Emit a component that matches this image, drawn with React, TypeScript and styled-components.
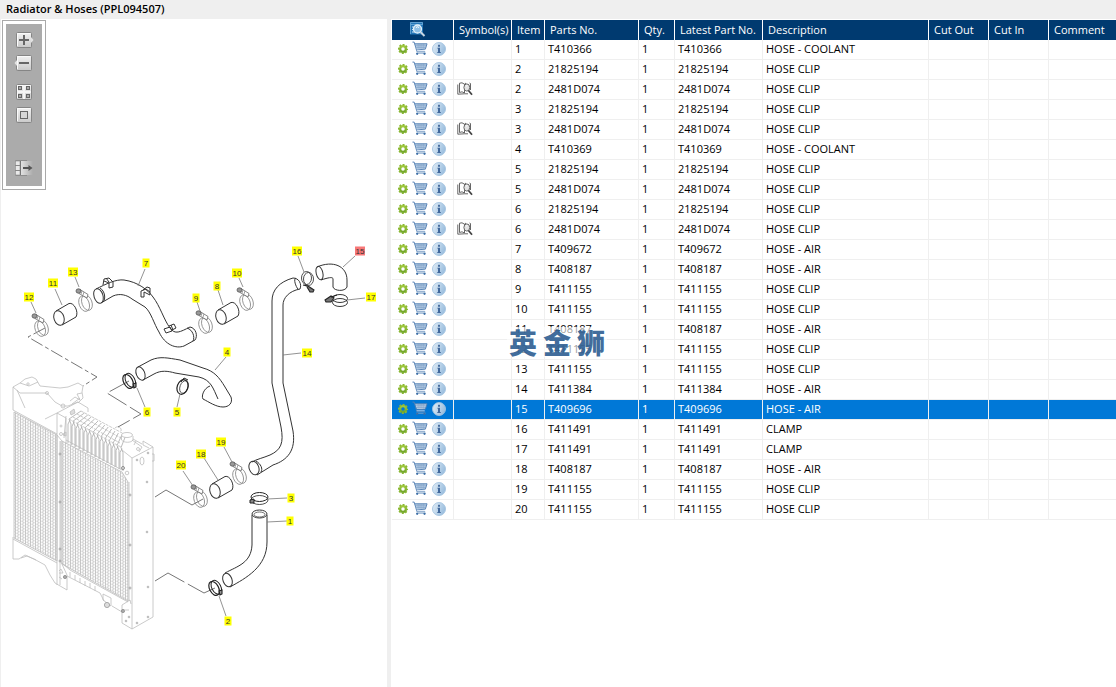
import React from "react";
import styled, { createGlobalStyle } from "styled-components";

const GlobalStyle = createGlobalStyle`
  * { box-sizing: border-box; }
  html, body { margin: 0; height: 100%; }
  body {
    background: #fff;
    color: #000;
    font-family: "Open Sans", "Noto Sans", sans-serif;
    font-size: 11px;
    line-height: 17px;
  }
`;

const Page = styled.div`
  display: flex;
  flex-direction: column;
  min-height: 100vh;
`;

const TitleBar = styled.h1`
  margin: 0;
  padding: 0 6px;
  height: 19px;
  line-height: 18px;
  font-size: 11px;
  font-weight: 600;
  background: #efefef;
`;

const Workspace = styled.main`
  flex: 1;
  display: flex;
  align-items: stretch;
  min-width: 0;
`;

const DrawingPane = styled.section`
  flex: 0 0 387px;
  padding: 1px 0 0;
  border-left: 1px solid #efefef;
`;

const ToolFrame = styled.div`
  width: 44px;
  margin-left: 1px;
  padding: 3px;
  border: 1px solid #a9a9a9;
`;

const Tools = styled.div`
  display: flex;
  flex-direction: column;
  align-items: center;
  gap: 7px;
  padding: 8px 0 10px;
  background: #ababab;
`;

const ToolButton = styled.button<{ $before?: number }>`
  display: block;
  width: 20px;
  height: 16px;
  margin: ${(p) => p.$before ?? 0}px 0 0;
  padding: 0;
  border: 0;
  background: none;
  cursor: pointer;
  svg { display: block; }
`;

const Drawing = styled.svg`
  display: block;
  width: 100%;
`;

const Splitter = styled.div`
  flex: 0 0 4px;
  background: #efefef;
  cursor: col-resize;
`;

const ListPane = styled.section`
  position: relative;
  flex: 1;
  min-width: 0;
  padding: 1px 0 0 1px;
  overflow: hidden;
`;

const PartsTable = styled.table`
  width: 100%;
  table-layout: fixed;
  border-collapse: separate;
  border-spacing: 0;
`;

const Col = styled.col<{ $w?: number }>`
  width: ${(p) => (p.$w ? `${p.$w}px` : "auto")};
`;

const HeadCell = styled.th`
  height: 20px;
  padding: 0 0 2px 5px;
  border-right: 1px solid #fff;
  background: #003a70;
  color: #fff;
  font-weight: 400;
  text-align: left;
  white-space: nowrap;
  svg { display: block; margin-left: 12px; }
  &:last-child { border-right: 0; }
`;

const Cell = styled.td`
  height: 20px;
  padding: 0 0 2px 3px;
  border-right: 1px solid #efefef;
  border-bottom: 1px solid #efefef;
  white-space: nowrap;
  &:last-child { border-right: 0; }
`;

const Row = styled.tr<{ $selected?: boolean }>`
  background: ${(p) => (p.$selected ? "#0078d7" : "#fff")};
  color: ${(p) => (p.$selected ? "#fff" : "#000")};
`;

const Actions = styled.div`
  display: flex;
  align-items: center;
  height: 17px;
  padding-left: 3px;
  gap: 4px;
`;

const IconButton = styled.button`
  display: block;
  padding: 0;
  border: 0;
  background: none;
  cursor: pointer;
  svg { display: block; }
`;

const Watermark = styled.div`
  position: absolute;
  left: 116px;
  top: 308px;
  display: flex;
  gap: 6px;
  padding: 0 2px;
  height: 30px;
  line-height: 30px;
  background: rgba(255, 255, 255, 0.6);
  color: rgba(39, 89, 142, 0.88);
  font-family: "Noto Sans CJK SC", sans-serif;
  font-size: 28px;
  font-weight: 900;
  pointer-events: none;
`;

const HiddenDefs = styled.svg`
  position: absolute;
`;

const SharedIcons = () => (
  <HiddenDefs width="0" height="0" aria-hidden="true">
    <defs>
      <linearGradient id="toolFace" x1="0" y1="0" x2="0" y2="1">
        <stop offset="0" stopColor="#f3f3f3" />
        <stop offset="1" stopColor="#c9c9c9" />
      </linearGradient>
      <linearGradient id="fade" x1="0" y1="0" x2="1" y2="0">
        <stop offset="0" stopColor="#e2e2e2" />
        <stop offset="1" stopColor="#ababab" />
      </linearGradient>
      <linearGradient id="leaf" x1="0" y1="0" x2="0" y2="1">
        <stop offset="0" stopColor="#a3cb3d" />
        <stop offset="1" stopColor="#6fa32a" />
      </linearGradient>
      <linearGradient id="glass" x1="0" y1="0" x2="1" y2="0.4">
        <stop offset="0" stopColor="#e6f0f8" />
        <stop offset="1" stopColor="#9cbfdf" />
      </linearGradient>
    </defs>
    <symbol id="gear" viewBox="0 0 10 10">
      <circle cx="5" cy="5" r="2.9" fill="none" stroke="url(#leaf)" strokeWidth="2.3" />
      <circle cx="5" cy="5" r="4.3" fill="none" stroke="#8ab832" strokeWidth="1.6" strokeDasharray="2 1.377" strokeDashoffset="1" />
    </symbol>
    <symbol id="cart" viewBox="0 0 17 15">
      <path d="M3 2.5H16L14 8H5z" fill="#b9cfe6" />
      <path d="M3.5 4.5h12M4.5 6.5h10M6.5 2.5v5M8.5 2.5v5M10.5 2.5v5M12.5 2.5v5" stroke="#7d9fc6" strokeWidth="0.6" fill="none" />
      <path d="M0.500 0.700H2.300L5.300 11H14M2.800 2.500H16L14.200 8.200L5 9" fill="none" stroke="#5380b3" strokeWidth="1" />
      <path d="M5 9.900H13.500" stroke="#d5e2ef" strokeWidth="0.800" />
      <path d="M4.500 12.500H14.500" stroke="#7ea2c9" />
      <circle cx="5.500" cy="13.200" r="1.200" fill="#3c6ea6" />
      <circle cx="13.300" cy="13.200" r="1.200" fill="#3c6ea6" />
    </symbol>
    <symbol id="info" viewBox="0 0 14 14">
      <circle cx="7" cy="7" r="6.500" fill="url(#glass)" stroke="#a3c3e0" strokeWidth="0.900" />
      <rect x="6" y="2.800" width="2" height="2" rx="0.500" fill="#41689c" />
      <path d="M5.500 5.800H8V10H8.800V11H5.300V10H6V6.800H5.500z" fill="#41689c" />
    </symbol>
    <symbol id="book" viewBox="0 0 16 14">
      <path d="M1.500 2L4 0.800L7.500 2.200L13 0.800L14 2V12H8L1 12.500z" fill="#fff" />
      <path d="M2.500 10.500V1.200L5 0.800L7.500 2.200V11L5 9.800L2.500 10.500M7.500 2.200L9 1M12.500 1L13.500 1.500V8M0.800 2.500V12.200L7.500 11.800H11" fill="none" stroke="#555" strokeWidth="0.900" />
      <ellipse cx="9.800" cy="5.500" rx="2.900" ry="3.600" fill="#e4e4e4" stroke="#666" />
      <path d="M9 4.200L10.500 3.500" stroke="#fff" />
      <path d="M11.500 8.500L15 12.800" stroke="#444" strokeWidth="1.800" />
    </symbol>
    <symbol id="lookup" viewBox="0 0 17 16">
      <rect x="1" y="1" width="13" height="12.500" fill="#2476b8" />
      <path d="M1.500 13V1.500H13.500V4" fill="none" stroke="#5f9fd0" />
      <path d="M1 3.500H14" stroke="#5fa3d6" />
      <path d="M3 6H5M3 8.500H4.500M3 11H6" stroke="#cfe4f4" />
      <circle cx="8.500" cy="8" r="4" fill="#8fc0e6" stroke="#e4f1fa" strokeWidth="1.300" />
      <path d="M7 6.500Q8.500 5 10 6.500" fill="none" stroke="#fff" />
      <path d="M11.500 11L15.500 15" stroke="#c7d5e2" strokeWidth="2" />
    </symbol>
  </HiddenDefs>
);

const Icon = ({ name, w, h }: { name: string; w: number; h: number }) => (
  <svg width={w} height={h} aria-hidden="true"><use href={`#${name}`} /></svg>
);

const Face = () => (
  <>
    <rect x="2.500" y="0.500" width="15" height="15" rx="1" fill="url(#toolFace)" stroke="#858585" />
    <path d="M3.500 14V1.500H16" fill="none" stroke="#fafafa" />
  </>
);

const Toolbar = () => (
  <ToolFrame>
    <Tools role="toolbar" aria-label="Drawing tools">
      <ToolButton aria-label="Zoom in">
        <svg width="20" height="16">
          <Face />
          <path d="M17 5L19.500 8L17 11z" fill="#e3e3e3" />
          <path d="M5 8H15M10 3V13" stroke="#666" strokeWidth="2" />
        </svg>
      </ToolButton>
      <ToolButton aria-label="Zoom out">
        <svg width="20" height="16">
          <Face />
          <path d="M3 5L0.500 8L3 11z" fill="#e3e3e3" />
          <path d="M5 8H15" stroke="#666" strokeWidth="2" />
        </svg>
      </ToolButton>
      <ToolButton aria-label="Fit to window" $before={6}>
        <svg width="20" height="16">
          <Face />
          <path d="M10 1V15M3 8H17" stroke="#f4f4f4" strokeWidth="2" />
          {[[4.5, 2.5], [12.5, 2.5], [4.5, 10.5], [12.5, 10.5]].map(([x, y]) => (
            <rect key={`${x}-${y}`} x={x} y={y} width="3" height="3" fill="#aaa" stroke="#666" />
          ))}
        </svg>
      </ToolButton>
      <ToolButton aria-label="Actual size">
        <svg width="20" height="16">
          <Face />
          <rect x="6.500" y="4.500" width="7" height="7" fill="#d6d6d6" stroke="#666" />
        </svg>
      </ToolButton>
      <ToolButton aria-label="Hide list" $before={30}>
        <svg width="20" height="16">
          <rect x="7" y="1" width="12" height="14" fill="url(#fade)" />
          <path d="M1.500 0.500H13M1.500 15.500H13" stroke="#8e8e8e" />
          <rect x="1.500" y="1" width="4.500" height="14" fill="#e9e9e9" stroke="#8b8b8b" strokeWidth="0.600" />
          <path d="M1 5.500H6M1 10.500H6" stroke="#888" />
          <path d="M6.500 1V15" stroke="#777" />
          <path d="M9 8H15" stroke="#555" strokeWidth="2" />
          <path d="M14.500 5L18.500 8L14.500 11z" fill="#555" />
        </svg>
      </ToolButton>
    </Tools>
  </ToolFrame>
);

type Callout = { n: number; x: number; y: number; line: string; hot?: boolean };

const callouts: Callout[] = [
  { n: 12, x: 29, y: 297, line: "M31 302L36 313" },
  { n: 11, x: 53, y: 283, line: "M55 289L62 305" },
  { n: 13, x: 73, y: 272, line: "M75 277L79 287" },
  { n: 7, x: 146, y: 263, line: "M145 269L138 286" },
  { n: 10, x: 237, y: 273, line: "M239 278L243 287" },
  { n: 8, x: 217, y: 286, line: "M218 290L223 305" },
  { n: 9, x: 196, y: 298, line: "M197 302L200 311" },
  { n: 16, x: 297, y: 251, line: "M298 256L304 272" },
  { n: 15, x: 360, y: 251, line: "M355 256L343 267", hot: true },
  { n: 17, x: 371, y: 297, line: "M347 300L365 298" },
  { n: 14, x: 307, y: 353, line: "M283 355L301 353" },
  { n: 4, x: 227, y: 352, line: "M226 357L215 370" },
  { n: 6, x: 147, y: 412, line: "M137 388L145 407" },
  { n: 5, x: 177, y: 412, line: "M180 394L177 407" },
  { n: 19, x: 221, y: 442, line: "M224 447L232 462" },
  { n: 18, x: 201, y: 454, line: "M204 458L218 480" },
  { n: 20, x: 181, y: 465, line: "M183 471L193 486" },
  { n: 3, x: 291, y: 498, line: "M267 499L287 498" },
  { n: 1, x: 290, y: 521, line: "M267 522L287 521" },
  { n: 2, x: 228, y: 621, line: "M219 596L226 616" },
];

const Clamp = ({ x, y }: { x: number; y: number }) => (
  <g transform={`translate(${x} ${y})`} fill="none" stroke="#888" strokeWidth="0.800">
    <ellipse cx="-2" cy="0" rx="5" ry="8" transform="rotate(-20)" />
    <ellipse cx="1" cy="0" rx="5" ry="8" transform="rotate(-20)" />
    <path d="M-6 -13.500L2 -8.500L1 -5L-7 -9.500z" fill="#fff" stroke="#666" />
    <ellipse cx="-7.500" cy="-12" rx="2.500" ry="2.200" fill="#999" stroke="#555" />
    <path d="M-4 -12L-5 -9M-2 -11L-3 -8" />
  </g>
);

const Sleeve = ({ x, y }: { x: number; y: number }) => (
  <g transform={`translate(${x} ${y})`} fill="none" stroke="#333">
    <ellipse rx="5" ry="7.500" transform="rotate(-18)" />
    <path d="M-3 -7L10 -14.500C15 -16 20 -6 17 -1L3 7" />
  </g>
);

const ArmClamp = ({ x, y }: { x: number; y: number }) => (
  <g transform={`translate(${x} ${y})`} fill="none" stroke="#222">
    <ellipse cx="-1" rx="4.500" ry="7.500" transform="rotate(-28)" strokeWidth="1.200" />
    <ellipse cx="1.500" cy="0" rx="4.500" ry="7.500" transform="rotate(-28)" strokeWidth="1" />
    <path d="M4 3L7 2V6L5 7z" fill="#999" strokeWidth="1.100" />
  </g>
);

const fins = Array.from({ length: 14 }, (_, i) => i);

const Radiator = () => (
  <g fill="none" stroke="#bcbcbc" strokeWidth="0.800">
    <path d="M14 412L57 435V561L14 538z" fill="url(#mesh)" />
    <path d="M62 441L122 472L128 482V601L62 564z" fill="url(#mesh)" />
    <path d="M13 410V387L20 383L25 379L32 377L36 379L40 386L60 388L68 387L78 383L83 386L82 392L83 398L78 403" />
    <path d="M13 387L20 393L38 393L47 393L55 402L62 406L68 406L78 402M17 390L25 408M13 410L57 434M20 383L29 386L38 382M45 419L57 413M70 401L75 397L80 400L77 394L82 393M72 404L80 398" />
    <circle cx="28" cy="384" r="1.200" /><circle cx="47" cy="393" r="1.500" /><circle cx="63" cy="406" r="2" />
    <path d="M57 585V413L78 402L88 408V412M57 413L66 418V444M57 435L62 441M61 441V562M60 441V585" />
    <path d="M70 412L74 409L75 413L71 415zM64 433L66 432V436L63 435z" fill="#ddd" />
    <circle cx="61" cy="426" r="1" /><circle cx="61" cy="434" r="1.500" />
    {fins.map((i) => (
      <path key={i} d={`M${81 + i * 3.4} ${411 + i * 2}L${69 + i * 4} ${419 + i * 2.2}L${71 + i * 4} ${424 + i * 2.2}V${445 + i * 2}M${70 + i * 4} ${420 + i * 2.2}L${68 + i * 4} ${424 + i * 2.2}V${443 + i * 2}`} stroke="#aaa" />
    ))}
    <path d="M81 411L124 434M77 414L121 438M73 417L120 443M69 419L121 447" strokeDasharray="3 1" />
    <path d="M66 440L122 470M64 438L66 416" />
    <ellipse cx="127" cy="435" rx="5.500" ry="2.500" fill="#fff" />
    <path d="M121.500 436V440C124 443 131 443 133 440V436M133 439L142 444M115 428C118 425 122 428 121 431M136 441L134 445" />
    <path d="M122 450L132 458L153 447L143 441V445L149 448M132 458V629M153 447V617L132 629L122 623V605M132 440L142 447L139 452M129 482V601M152 454H154V461H152" />
    <ellipse cx="142" cy="461" rx="2" ry="4" /><circle cx="138" cy="449" r="1.500" />
    {[[147, 482], [147, 532], [148, 587], [148, 617], [137, 623], [148, 453], [137, 460], [126, 621], [129, 617]].map(([x, y]) => (
      <circle key={`${x}-${y}`} cx={x} cy={y} r="0.900" fill="#aaa" />
    ))}
    <circle cx="123" cy="468" r="1.500" stroke="#777" /><circle cx="127" cy="473" r="1.800" />
    {[[60, 454], [60, 502], [60, 549], [60, 561], [130, 495], [130, 545], [130, 588]].map(([x, y]) => (
      <circle key={`${x}-${y}`} cx={x} cy={y} r="1" stroke="#999" />
    ))}
    <path d="M13 537V559L19 559L25 555L34 559L45 565L50 575L55 583L67 590V575L61 562M13 539L57 563M21 558L27 556L36 560" />
    <path d="M62 563L70 570L128 602M67 576L100 593L104 601M112 606L122 612M70 572V577M75 575V580M80 578V583M85 581V586M90 583V588M95 586V591M103 594L111 598V606L103 600zM122 605L130 600L131 604" />
    <circle cx="107" cy="605" r="2.600" fill="#ddd" stroke="#999" /><circle cx="65" cy="577" r="1.600" fill="#aaa" stroke="#888" />
    <circle cx="123" cy="611" r="1.600" fill="#aaa" stroke="#888" /><path d="M59 571L61 569L63 573H59M59 577L62 579M124 610H129" />
  </g>
);

const HoseDrawing = () => (
  <Drawing viewBox="1 190 386 450" role="img" aria-label="Radiator and hoses exploded view">
    <defs>
      <pattern id="mesh" width="5" height="3" patternUnits="userSpaceOnUse">
        <rect width="5" height="3" fill="#e6e6e6" />
        <path d="M0.500 0V3M3 0V3" stroke="#c2c2c2" strokeWidth="0.900" />
        <circle cx="1.750" cy="0.800" r="0.900" fill="#fff" />
        <circle cx="4.250" cy="2.200" r="0.900" fill="#fff" />
      </pattern>
    </defs>
    <Radiator />
    <g fill="none" stroke="#666" strokeWidth="0.900" strokeDasharray="13 3 4 3">
      <path d="M45 328L28 337L97 377L83 386" />
      <path d="M129 381L107 393L141 414L118 427" strokeDasharray="22 4" />
      <path d="M155 497L166 490L192 505L203 499" strokeDasharray="none" />
      <path d="M155 581L168 573L204 593L215 588" strokeDasharray="34 4" />
    </g>
    <g fill="none" stroke="#333" strokeWidth="1">
      <ellipse cx="98.500" cy="296" rx="4.500" ry="7.500" transform="rotate(-18 98.500 296)" />
      <path d="M96 289C106 284 116 279 124 280C138 282 148 290 153 297C160 306 164 320 170 328C175 335 180 332 190 327" />
      <path d="M101 303L113 296C120 293 127 295 132 299L145 307C151 312 154 324 159 332C165 345 176 349 184 346L195 340" />
      <path d="M190 327C196 328 198 336 195 340M187 328C193 330 195 337 193 341M100 288C105 291 106 299 103 302" />
      <path d="M103 285L104 279L109 278L113 282V287L109 288V283L104 281M106 278L109 282" />
      <path d="M141 291L146 289L150 292V295L144 292V297H141zM143 290L147 287L150 288V292" />
      <path d="M164 329L170 327L172 331L166 333zM169 326L174 324L176 328L172 330M171 325L173 330" />

      <ellipse cx="140.500" cy="373.500" rx="4.200" ry="7" transform="rotate(-22 140.500 373.500)" />
      <path d="M138 367L151 360C160 356 168 358 180 360L203 368C214 371 219 377 225 387L231 397C233 403 229 407 223 407C216 407 209 402 203 399C201 396 204 388 210 386" />
      <path d="M143 380L154 374C161 370 168 371 175 373L199 377C211 380 213 388 218 399" />

      <ellipse cx="319.500" cy="273" rx="3.300" ry="6.800" transform="rotate(-14 319.500 273)" />
      <path d="M317 267C333 260 347 266 347 280V287C345 292 334 291 333 287V279C333 277 330 277 321 280" />

      <path d="M293 278C279 282 272 290 272 301V383L281 427C284 443 281 450 270 455C263 458 257 459 252 462" />
      <path d="M300 289C289 291 283 298 283 305V383L293 431C296 450 288 460 273 465L257 475" />
      <path d="M293 278C299 278 302 284 300 289M296 278C293 279 296 287 298 289M256 461C261 464 263 469 261 472" />
      <ellipse cx="254" cy="468" rx="4.800" ry="7" transform="rotate(-20 254 468)" />

      <ellipse cx="259.500" cy="514" rx="7.500" ry="4" />
      <ellipse cx="259.500" cy="514.500" rx="5.500" ry="2.500" strokeWidth="0.700" />
      <path d="M252 515V545C251 563 238 566 225 573M267 515V542C267 567 246 578 230 587" />
      <ellipse cx="227.500" cy="580" rx="4.500" ry="7" transform="rotate(-20 227.500 580)" />
    </g>
    <Sleeve x={59} y={318} />
    <Sleeve x={221} y={317} />
    <Sleeve x={215} y={491} />
    <Clamp x={42} y={328} />
    <Clamp x={86} y={303} />
    <Clamp x={206} y={325} />
    <Clamp x={247} y={302} />
    <Clamp x={240} y={476} />
    <Clamp x={201} y={499} />
    <ArmClamp x={129} y={381} />
    <ArmClamp x={215} y={588} />
    <g fill="none" stroke="#222">
      <ellipse cx="182.500" cy="387" rx="5.300" ry="7.500" transform="rotate(20 182.500 387)" strokeWidth="1.200" />
      <ellipse cx="184" cy="387" rx="4" ry="6.500" transform="rotate(20 184 387)" strokeWidth="0.700" />
      <path d="M181 382L184 378L188 380" />
      <ellipse cx="259.500" cy="497" rx="8.500" ry="4.500" />
      <ellipse cx="259.500" cy="500" rx="8.500" ry="4.500" strokeWidth="0.800" />
      <path d="M250 500L254 499V503L250 503z" fill="#888" />
      <ellipse cx="306.500" cy="278" rx="5" ry="6.500" strokeWidth="0.800" />
      <ellipse cx="308.500" cy="279" rx="5" ry="6.500" strokeWidth="0.800" />
      <path d="M303 285L308 286L314 290L313 292L310 292L307 287" fill="#777" strokeWidth="1.100" />
      <ellipse cx="340" cy="298.500" rx="7.500" ry="4" strokeWidth="0.900" />
      <ellipse cx="340" cy="302.500" rx="7.500" ry="4" strokeWidth="0.900" />
      <path d="M325 300L331 296L334 298L331 302L326 302zM331 297L337 295" fill="#777" strokeWidth="1.100" />
    </g>
    {callouts.map((c) => {
      const w = c.n > 9 ? 10 : 7;
      return (
        <g key={c.n}>
          <path d={c.line} stroke="#777" strokeWidth="0.800" />
          <rect x={c.x - w / 2} y={c.y - 4.5} width={w} height="9" fill={c.hot ? "#f87878" : "#ffff00"} />
          <text x={c.x} y={c.y + 3} textAnchor="middle" fontFamily="Liberation Sans, sans-serif" fontSize="8" fill="#333">{c.n}</text>
        </g>
      );
    })}
  </Drawing>
);

type Part = { item: number; no: string; text: string; symbol?: boolean };

const clip = (item: number, no: string, symbol = false): Part => ({ item, no, text: "HOSE CLIP", symbol });

const parts: Part[] = [
  { item: 1, no: "T410366", text: "HOSE - COOLANT" },
  clip(2, "21825194"),
  clip(2, "2481D074", true),
  clip(3, "21825194"),
  clip(3, "2481D074", true),
  { item: 4, no: "T410369", text: "HOSE - COOLANT" },
  clip(5, "21825194"),
  clip(5, "2481D074", true),
  clip(6, "21825194"),
  clip(6, "2481D074", true),
  { item: 7, no: "T409672", text: "HOSE - AIR" },
  { item: 8, no: "T408187", text: "HOSE - AIR" },
  clip(9, "T411155"),
  clip(10, "T411155"),
  { item: 11, no: "T408187", text: "HOSE - AIR" },
  clip(12, "T411155"),
  clip(13, "T411155"),
  { item: 14, no: "T411384", text: "HOSE - AIR" },
  { item: 15, no: "T409696", text: "HOSE - AIR" },
  { item: 16, no: "T411491", text: "CLAMP" },
  { item: 17, no: "T411491", text: "CLAMP" },
  { item: 18, no: "T408187", text: "HOSE - AIR" },
  clip(19, "T411155"),
  clip(20, "T411155"),
];

const columnWidths = [62, 58, 33, 94, 36, 88, 166, 60, 60, undefined];
const headings = ["Symbol(s)", "Item", "Parts No.", "Qty.", "Latest Part No.", "Description", "Cut Out", "Cut In", "Comment"];

export default function App() {
  return (
    <Page>
      <GlobalStyle />
      <SharedIcons />
      <TitleBar>Radiator &amp; Hoses (PPL094507)</TitleBar>
      <Workspace>
        <DrawingPane>
          <Toolbar />
          <HoseDrawing />
        </DrawingPane>
        <Splitter role="separator" aria-orientation="vertical" />
        <ListPane>
          <PartsTable>
            <colgroup>
              {columnWidths.map((w, i) => <Col key={i} $w={w} />)}
            </colgroup>
            <thead>
              <tr>
                <HeadCell scope="col" aria-label="Actions"><Icon name="lookup" w={17} h={16} /></HeadCell>
                {headings.map((h) => <HeadCell key={h} scope="col">{h}</HeadCell>)}
              </tr>
            </thead>
            <tbody>
              {parts.map((p) => (
                <Row key={`${p.item}-${p.no}`} $selected={p.item === 15}>
                  <Cell>
                    <Actions>
                      <IconButton aria-label={`Options for item ${p.item}`}><Icon name="gear" w={10} h={10} /></IconButton>
                      <IconButton aria-label={`Add item ${p.item} to cart`}><Icon name="cart" w={16} h={15} /></IconButton>
                      <IconButton aria-label={`About item ${p.item}`}><Icon name="info" w={14} h={14} /></IconButton>
                    </Actions>
                  </Cell>
                  <Cell>{p.symbol && <IconButton aria-label={`Symbol for item ${p.item}`}><Icon name="book" w={16} h={14} /></IconButton>}</Cell>
                  <Cell>{p.item}</Cell>
                  <Cell>{p.no}</Cell>
                  <Cell>1</Cell>
                  <Cell>{p.no}</Cell>
                  <Cell>{p.text}</Cell>
                  <Cell />
                  <Cell />
                  <Cell />
                </Row>
              ))}
            </tbody>
          </PartsTable>
          <Watermark><span>英</span><span>金</span><span>狮</span></Watermark>
        </ListPane>
      </Workspace>
    </Page>
  );
}
